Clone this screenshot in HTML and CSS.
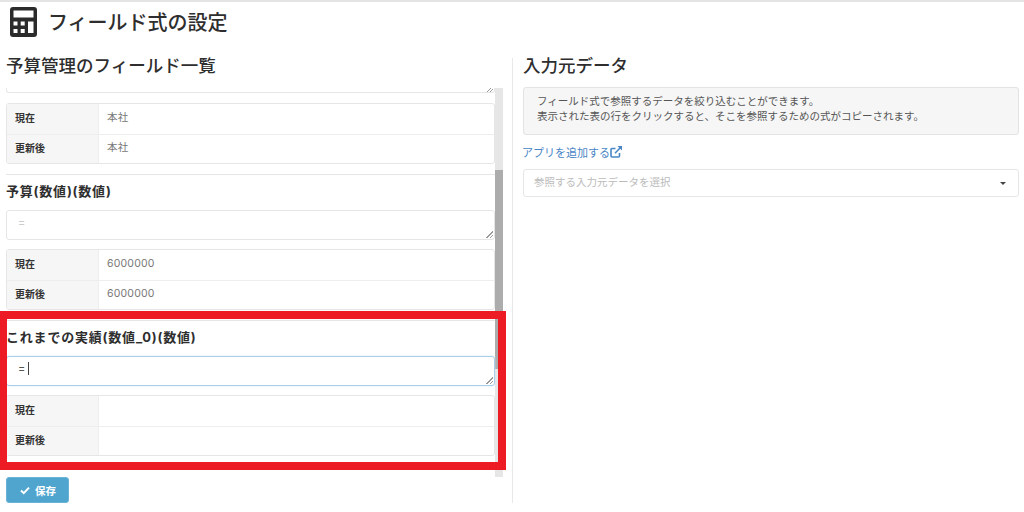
FILE: index.html
```html
<!DOCTYPE html>
<html lang="ja">
<head>
<meta charset="utf-8">
<title>フィールド式の設定</title>
<link rel="stylesheet" href="styles.css">
</head>
<body>
<header class="page-head">
  <svg class="calc-icon" viewBox="0 0 27 30" aria-hidden="true">
    <path fill="#2b2b2b" fill-rule="evenodd" d="M3 0h21a3 3 0 0 1 3 3v24a3 3 0 0 1-3 3H3a3 3 0 0 1-3-3V3a3 3 0 0 1 3-3zM3.500 3.500V10.500H23.500V3.500zM3.500 14.500v4h4v-4zM10.700 14.500v4h4v-4zM18 14.500V26h5.500V14.500zM3.500 22v4h4v-4zM10.700 22v4h4v-4z"/>
  </svg>
  <h1 class="page-title">フィールド式の設定</h1>
</header>
<main class="columns">
  <section class="left">
    <h2 class="section-title">予算管理のフィールド一覧</h2>
    <div class="scroller">
      <div class="fields">
        <div class="textarea-tail"><span class="grip"></span></div>
        <div class="kv">
          <div class="kv-row"><div class="kv-key">現在</div><div class="kv-val">本社</div></div>
          <div class="kv-row"><div class="kv-key">更新後</div><div class="kv-val">本社</div></div>
        </div>
        <hr class="rule">
        <h3 class="field-name">予算(数値)(数値)</h3>
        <div class="textarea"><span class="eq muted">=</span><span class="grip"></span></div>
        <div class="kv">
          <div class="kv-row"><div class="kv-key">現在</div><div class="kv-val">6000000</div></div>
          <div class="kv-row"><div class="kv-key">更新後</div><div class="kv-val">6000000</div></div>
        </div>
        <hr class="rule">
        <h3 class="field-name">これまでの実績(数値_0)(数値)</h3>
        <div class="textarea focus"><span class="eq">=</span><span class="caret"></span><span class="grip"></span></div>
        <div class="kv">
          <div class="kv-row"><div class="kv-key">現在</div><div class="kv-val"></div></div>
          <div class="kv-row"><div class="kv-key">更新後</div><div class="kv-val"></div></div>
        </div>
        <hr class="rule">
      </div>
      <div class="scrollbar"><div class="thumb"></div></div>
    </div>
    <div class="highlight"></div>
    <button class="save" type="button">
      <svg class="check" viewBox="0 0 12 10" aria-hidden="true"><path fill="none" stroke="#fff" stroke-width="2.400" d="M1.200 5l3.300 3.200L10.800 1.500"/></svg>
      保存
    </button>
  </section>
  <section class="right">
    <h2 class="section-title">入力元データ</h2>
    <div class="well">フィールド式で参照するデータを絞り込むことができます。<br>表示された表の行をクリックすると、そこを参照するための式がコピーされます。</div>
    <a class="add-app" href="#">アプリを追加する<svg class="ext" viewBox="0 0 12 12" aria-hidden="true"><path fill="none" stroke="#4a86c5" stroke-width="1.600" d="M9.500 7v3a1 1 0 0 1-1 1H2a1 1 0 0 1-1-1V3.500a1 1 0 0 1 1-1h3.500"/><path fill="none" stroke="#4a86c5" stroke-width="1.600" d="M5 7.200L10.500 1.500"/><path fill="#4a86c5" d="M7.500 0H12v4.500z"/></svg></a>
    <div class="select"><span class="placeholder">参照する入力元データを選択</span><span class="arrow"></span></div>
  </section>
</main>
</body>
</html>
```
FILE: styles.css
```css
* { box-sizing: border-box; }
html, body { margin: 0; height: 512px; overflow: hidden; }
body {
  position: relative;
  background: #fff;
  color: #333;
  font-family: "Inter", "Noto Sans CJK JP", "Noto Sans", sans-serif;
  font-size: 11px;
  border-top: 2px solid #e4e4e4;
}
.page-head { display: flex; align-items: flex-start; gap: 11px; padding: 5px 0 0 10px; height: 35px; }
.calc-icon { width: 27px; height: 30px; flex: none; }
.page-title { margin: 1px 0 0; font-size: 20px; line-height: 30px; font-weight: 500; color: #2e2e2e; }
.columns { display: flex; padding-top: 21px; }
.left { width: 513px; height: 445px; padding-left: 6px; border-right: 1px solid #e8e8e8; }
.section-title { margin: -6px 0 0; font-size: 17.500px; line-height: 28px; font-weight: 500; color: #2e2e2e; }
.scroller { display: flex; height: 389px; margin-top: 8px; overflow: hidden; width: 497px; }
.fields { width: 489px; flex: none; }
.scrollbar { width: 8px; background: #e6e6e6; padding-top: 82px; }
.thumb { height: 199px; background: #acacac; }
.textarea-tail { position: relative; height: 5px; border: 1px solid #e6e6e6; border-top: 0; border-radius: 0 0 3px 3px; }
.kv { border: 1px solid #e6e6e6; border-radius: 3px; margin-top: 10px; overflow: hidden; height: 61px; }
.kv-row { display: flex; height: 30px; }
.kv-row + .kv-row { border-top: 1px solid #eee; }
.kv-key { width: 92px; flex: none; padding-left: 8px; background: #f6f6f6; border-right: 1px solid #eee; font-weight: 700; font-size: 10px; line-height: 28px; color: #333; }
.kv-val { flex: 1; padding-left: 8px; line-height: 28px; font-size: 10.500px; color: #777; letter-spacing: .2px; }
.kv-row + .kv-row .kv-key, .kv-row + .kv-row .kv-val { line-height: 26px; }
.rule { height: 1px; margin: 10.200px 0 0; border: 0; background: #e6e6e6; }
.field-name { margin: 4.500px 0 0; height: 24.500px; font-size: 13px; line-height: 22px; font-weight: 700; color: #2e2e2e; letter-spacing: .8px; }
.textarea { position: relative; display: flex; align-items: center; height: 30px; margin-top: 6px; padding: 0 0 6px 11px; border: 1px solid #e6e6e6; border-radius: 3px; font-size: 11px; }
.textarea.focus { border-color: #a9cfe8; box-shadow: 0 0 2px #cfe3f2; }
.textarea + .kv { margin-top: 9px; }
.eq { color: #555; }
.eq.muted { color: #ccc; }
.caret { width: 1px; height: 13px; margin-left: 3px; background: #444; }
.grip { position: absolute; right: 1px; bottom: 1px; width: 7px; height: 7px; background: linear-gradient(135deg, transparent 48%, #999 48%, #999 58%, transparent 58%, transparent 72%, #999 72%, #999 82%, transparent 82%); }
.textarea-tail .grip { bottom: 0; height: 5px; }
.highlight { position: absolute; left: 0; top: 309px; width: 506px; height: 159px; border: 8px solid #ed1c24; border-left-width: 7px; pointer-events: none; }
.save { display: flex; align-items: center; gap: 5px; width: 63px; height: 26px; margin-top: 0; padding: 0 0 0 13px; background: #50a5cf; border: 1px solid #6ab2d6; border-radius: 3px; color: #fff; font: 700 10.500px "Noto Sans CJK JP", sans-serif; }
.check { width: 10px; height: 9px; }
.right { width: 506px; padding-left: 10px; }
.well { margin-top: 7px; height: 48px; padding: 7px 13px; background: #f6f6f6; border: 1px solid #e3e3e3; border-radius: 3px; font-size: 10.500px; line-height: 14.500px; color: #555; }
.add-app { display: flex; align-items: center; margin: 8px 0 0 -1px; height: 17px; font-size: 11px; color: #4a86c5; text-decoration: none; }
.ext { width: 12px; height: 12px; }
.select { display: flex; justify-content: space-between; align-items: center; height: 28px; margin-top: 9px; padding: 0 12px 0 10px; border: 1px solid #e6e6e6; border-radius: 3px; font-size: 10.500px; color: #bbb; }
.placeholder { margin-bottom: 3px; }
.arrow { border: 3.500px solid transparent; border-top: 3.500px solid #444; border-bottom: 0; }
```
